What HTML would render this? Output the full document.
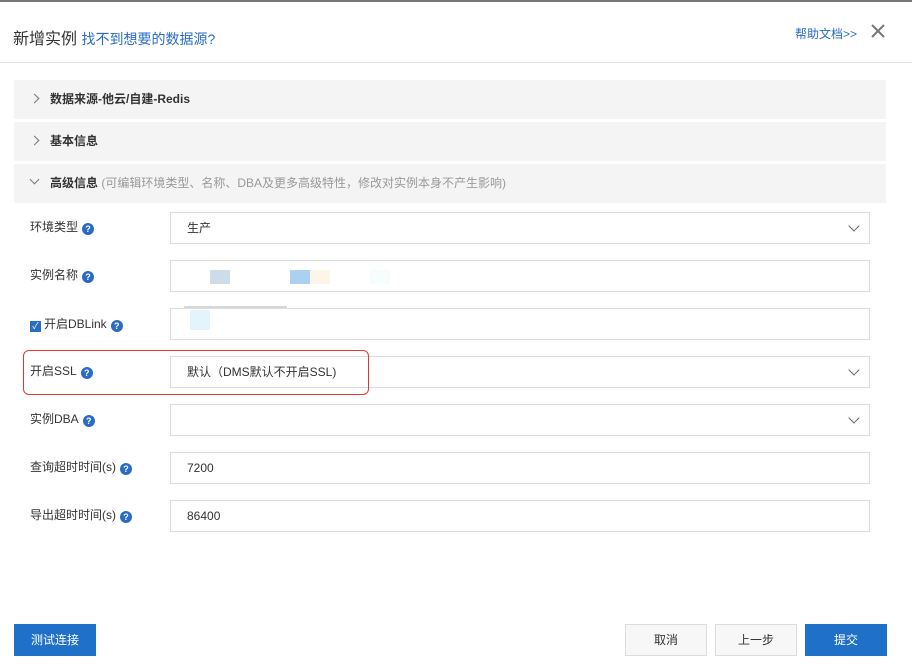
<!DOCTYPE html>
<html><head><meta charset="utf-8"><style>
*{box-sizing:border-box;margin:0;padding:0}
body{width:912px;height:668px;background:#fff;font-family:"Liberation Sans","Noto Sans CJK SC",sans-serif;position:relative;overflow:hidden;color:#333;font-size:12px}
.abs{position:absolute}
.sec{position:absolute;left:14px;width:872px;height:39px;background:#f4f4f4;font-weight:bold;font-size:12px;line-height:39px;padding-left:36px;color:#333}
.chev{position:absolute;left:17px;top:15px;width:7px;height:7px;border-right:1.5px solid #777;border-top:1.5px solid #777;transform:rotate(45deg)}
.chev.d{transform:rotate(135deg);top:12px}
.lbl{position:absolute;left:30px;font-size:12px;color:#333;line-height:16px}
.q{display:inline-block;width:12px;height:12px;border-radius:50%;background:#2a6cc4;color:#fff;font-size:9px;font-weight:bold;text-align:center;line-height:12px;vertical-align:-1px;margin-left:4px}
.in{position:absolute;left:170px;width:700px;height:32px;border:1px solid #dcdcdc;padding-left:16px;line-height:30px;font-size:12px;color:#333}
.dd::after{content:"";position:absolute;right:11px;top:9px;width:7px;height:7px;border-right:1.5px solid #666;border-bottom:1.5px solid #666;transform:rotate(45deg)}
.btn{position:absolute;top:624px;width:82px;height:32px;border:1px solid #dcdcdc;background:#f7f7f7;text-align:center;line-height:30px;font-size:12px;color:#333}
.blue{background:#1f70c9;border-color:#1f70c9;color:#fff}
</style></head><body>
<div class="abs" style="left:0;top:0;width:912px;height:2px;background:#777"></div>
<div class="abs" style="left:13px;top:25px;font-size:16px;color:#333">新增实例 <span style="font-size:14px;color:#2a6cc4">找不到想要的数据源?</span></div>
<div class="abs" style="left:795px;top:25px;font-size:12px;color:#2a6cc4">帮助文档&gt;&gt;</div>
<svg class="abs" style="left:870px;top:23px" width="16" height="16"><path d="M2 2L14 14M14 2L2 14" stroke="#777" stroke-width="2"/></svg>
<div class="abs" style="left:0;top:62px;width:912px;height:1px;background:#e5e5e5"></div>
<div class="sec" style="top:80px"><span class="chev"></span>数据来源-他云/自建-Redis</div>
<div class="sec" style="top:122px"><span class="chev"></span>基本信息</div>
<div class="sec" style="top:164px"><span class="chev d"></span>高级信息 <span style="font-weight:normal;color:#999">(可编辑环境类型、名称、DBA及更多高级特性，修改对实例本身不产生影响)</span></div>

<div class="lbl" style="top:219px">环境类型<span class="q">?</span></div>
<div class="in dd" style="top:212px">生产</div>
<div class="lbl" style="top:267px">实例名称<span class="q">?</span></div>
<div class="in" style="top:260px"></div>
<div class="abs" style="left:210px;top:270px;width:20px;height:14px;background:#ccdce8"></div>
<div class="abs" style="left:290px;top:270px;width:20px;height:14px;background:#acd0f0"></div>
<div class="abs" style="left:310px;top:270px;width:20px;height:14px;background:#fdf6e8"></div>
<div class="abs" style="left:370px;top:270px;width:20px;height:14px;background:#f5fdfd"></div>
<div class="abs" style="left:184px;top:306px;width:103px;height:3px;background:#d8d8d8"></div>
<div class="lbl" style="top:316px"><span style="display:inline-block;width:11px;height:11px;background:#2a6cc4;color:#fff;font-size:9px;line-height:11px;text-align:center;vertical-align:-1px;margin-right:3px">✓</span>开启DBLink<span class="q">?</span></div>
<div class="in" style="top:308px"></div>
<div class="abs" style="left:190px;top:310px;width:20px;height:20px;background:#e4f4fc"></div>
<div class="lbl" style="top:363px">开启SSL<span class="q">?</span></div>
<div class="in dd" style="top:356px">默认（DMS默认不开启SSL)</div>
<div class="abs" style="left:23px;top:350px;width:346px;height:45px;border:1.5px solid #e0392b;border-radius:6px"></div>
<div class="lbl" style="top:411px">实例DBA<span class="q">?</span></div>
<div class="in dd" style="top:404px"></div>
<div class="lbl" style="top:459px">查询超时时间(s)<span class="q">?</span></div>
<div class="in" style="top:452px">7200</div>
<div class="lbl" style="top:507px">导出超时时间(s)<span class="q">?</span></div>
<div class="in" style="top:500px">86400</div>

<div class="btn blue" style="left:14px">测试连接</div>
<div class="btn" style="left:625px">取消</div>
<div class="btn" style="left:715px">上一步</div>
<div class="btn blue" style="left:805px">提交</div>
</body></html>
